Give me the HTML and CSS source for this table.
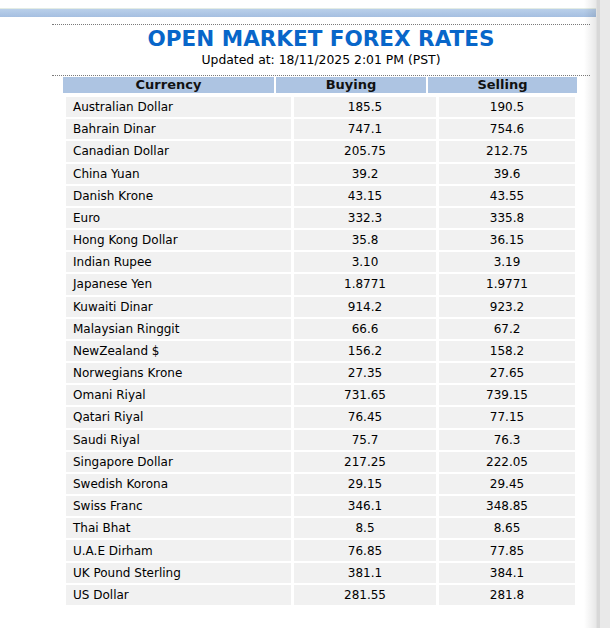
FILE: index.html
```html
<!DOCTYPE html>
<html>
<head>
<meta charset="utf-8">
<title>Open Market Forex Rates</title>
<link rel="stylesheet" href="styles.css">
</head>
<body>
<div class="page">
  <div class="topbar"></div>
  <div class="content">
    <div class="rule"></div>
    <h1 class="title">OPEN MARKET FOREX RATES</h1>
    <p class="updated">Updated at: 18/11/2025 2:01 PM (PST)</p>
    <div class="rule rule-low"></div>
    <div class="head">
      <div class="hcell">Currency</div>
      <div class="hcell">Buying</div>
      <div class="hcell">Selling</div>
    </div>
    <div class="rates">
      <div class="name">Australian Dollar</div><div class="num">185.5</div><div class="num">190.5</div>
      <div class="name">Bahrain Dinar</div><div class="num">747.1</div><div class="num">754.6</div>
      <div class="name">Canadian Dollar</div><div class="num">205.75</div><div class="num">212.75</div>
      <div class="name">China Yuan</div><div class="num">39.2</div><div class="num">39.6</div>
      <div class="name">Danish Krone</div><div class="num">43.15</div><div class="num">43.55</div>
      <div class="name">Euro</div><div class="num">332.3</div><div class="num">335.8</div>
      <div class="name">Hong Kong Dollar</div><div class="num">35.8</div><div class="num">36.15</div>
      <div class="name">Indian Rupee</div><div class="num">3.10</div><div class="num">3.19</div>
      <div class="name">Japanese Yen</div><div class="num">1.8771</div><div class="num">1.9771</div>
      <div class="name">Kuwaiti Dinar</div><div class="num">914.2</div><div class="num">923.2</div>
      <div class="name">Malaysian Ringgit</div><div class="num">66.6</div><div class="num">67.2</div>
      <div class="name">NewZealand $</div><div class="num">156.2</div><div class="num">158.2</div>
      <div class="name">Norwegians Krone</div><div class="num">27.35</div><div class="num">27.65</div>
      <div class="name">Omani Riyal</div><div class="num">731.65</div><div class="num">739.15</div>
      <div class="name">Qatari Riyal</div><div class="num">76.45</div><div class="num">77.15</div>
      <div class="name">Saudi Riyal</div><div class="num">75.7</div><div class="num">76.3</div>
      <div class="name">Singapore Dollar</div><div class="num">217.25</div><div class="num">222.05</div>
      <div class="name">Swedish Korona</div><div class="num">29.15</div><div class="num">29.45</div>
      <div class="name">Swiss Franc</div><div class="num">346.1</div><div class="num">348.85</div>
      <div class="name">Thai Bhat</div><div class="num">8.5</div><div class="num">8.65</div>
      <div class="name">U.A.E Dirham</div><div class="num">76.85</div><div class="num">77.85</div>
      <div class="name">UK Pound Sterling</div><div class="num">381.1</div><div class="num">384.1</div>
      <div class="name">US Dollar</div><div class="num">281.55</div><div class="num">281.8</div>
    </div>
  </div>
</div>
<div class="side"></div>
</body>
</html>
```
FILE: styles.css
```css
html, body {
  margin: 0;
  padding: 0;
  background: #ffffff;
}
body {
  display: flex;
  height: 628px;
  overflow: hidden;
  font-family: "DejaVu Sans", Verdana, sans-serif;
  color: #000;
}
.page {
  width: 596px;
  flex: none;
  padding-top: 8px;
}
.topbar {
  height: 8px;
  border-top: 1px solid #e3ece4;
  background: linear-gradient(to bottom, #bad0ea, #a5bfe1);
}
.content {
  margin-left: 52px;
  width: 538px;
  padding-top: 7px;
}
.rule {
  border-top: 1px dotted #7a7a7a;
  height: 0;
}
.title {
  margin: 1px 0 0;
  text-align: center;
  font-size: 21.5px;
  line-height: 25px;
  font-weight: bold;
  color: #0866c9;
}
.updated {
  margin: 2px 0 0;
  text-align: center;
  font-size: 12.4px;
  line-height: 14px;
  color: #000;
}
.rule-low {
  margin-top: 8px;
}
.head {
  margin: 1px 0 0 11px;
  display: grid;
  grid-template-columns: 211px 150px 149px;
  column-gap: 2px;
  height: 16px;
}
.hcell {
  background: #adc4e2;
  text-align: center;
  font-size: 13px;
  font-weight: bold;
  line-height: 16px;
  color: #111;
}
.rates {
  margin: 4px 0 0 14px;
  display: grid;
  grid-template-columns: 225px 142px 136px;
  column-gap: 3px;
  row-gap: 2px;
  grid-auto-rows: 20.18px;
}
.name, .num {
  background: #f1f1f1;
  font-size: 12px;
  line-height: 14px;
  display: flex;
  align-items: center;
}
.name {
  padding-left: 7px;
}
.num {
  justify-content: center;
}
.side {
  flex: 1;
  position: relative;
  background: linear-gradient(to right, #e1e1e1 0, #e1e1e1 1px, #d8d8d8 1px, #d8d8d8 4px, #e9e9e9 4px);
}
.side::before {
  content: "";
  position: absolute;
  top: 0;
  bottom: 0;
  right: 100%;
  width: 12px;
  background: linear-gradient(to right, rgba(0,0,0,0), rgba(0,0,0,0.09));
}
```
